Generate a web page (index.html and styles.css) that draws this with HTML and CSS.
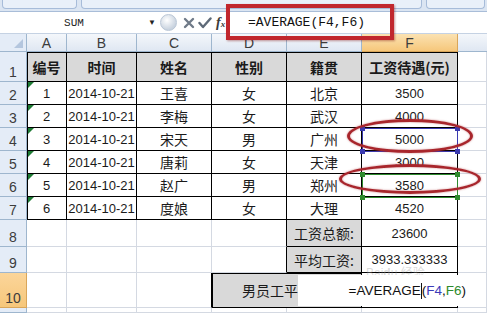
FILE: index.html
```html
<!DOCTYPE html>
<html>
<head>
    <meta charset="UTF-8">
    <title>工资表</title>
    <link rel="stylesheet" href="styles.css">
</head>
<body>
<div class="screen">
    <div class="ribbon">
        <div class="rbox b1"></div>
        <div class="rbox b2"></div>
        <div class="rbox b3"></div>
    </div>
    <div class="fbar">
        <div class="namebox">SUM</div>
        <div class="drop">&#9660;</div>
        <div class="tools">
            <span class="knob"></span>
            <svg class="tx" width="12" height="12" viewBox="0 0 12 12"><path d="M2 2 L10 10 M10 2 L2 10" stroke="#6f7a88" stroke-width="2.4" stroke-linecap="round"/></svg>
            <svg class="ok" width="14" height="12" viewBox="0 0 14 12"><path d="M1.5 6 L5 10 L12.5 1.5" fill="none" stroke="#5e6a78" stroke-width="2.4" stroke-linecap="round" stroke-linejoin="round"/></svg>
            <span class="fx">f<small>x</small></span>
        </div>
        <div class="finput">=AVERAGE(F4,F6)</div>
    </div>

    <div class="sheet">
        <!-- 列标 -->
        <div class="corner"><span></span></div>
        <div class="ch">A</div><div class="ch">B</div><div class="ch">C</div><div class="ch">D</div><div class="ch">E</div><div class="ch on">F</div><div class="ch last"></div>

        <!-- 1 -->
        <div class="rh">1</div>
        <div class="c t hd l top">编号</div><div class="c t hd top">时间</div><div class="c t hd top">姓名</div><div class="c t hd top">性别</div><div class="c t hd top">籍贯</div><div class="c t hd top">工资待遇(元)</div><div class="c"></div>

        <!-- 2 -->
        <div class="rh">2</div>
        <div class="c t num l tri">1</div><div class="c t num">2014-10-21</div><div class="c t">王喜</div><div class="c t">女</div><div class="c t">北京</div><div class="c t num">3500</div><div class="c"></div>

        <div class="rh">3</div>
        <div class="c t num l tri">2</div><div class="c t num">2014-10-21</div><div class="c t">李梅</div><div class="c t">女</div><div class="c t">武汉</div><div class="c t num">4000</div><div class="c"></div>

        <div class="rh">4</div>
        <div class="c t num l tri">3</div><div class="c t num">2014-10-21</div><div class="c t">宋天</div><div class="c t">男</div><div class="c t">广州</div><div class="c t num">5000</div><div class="c"></div>

        <div class="rh">5</div>
        <div class="c t num l tri">4</div><div class="c t num">2014-10-21</div><div class="c t">唐莉</div><div class="c t">女</div><div class="c t">天津</div><div class="c t num">3000</div><div class="c"></div>

        <div class="rh">6</div>
        <div class="c t num l tri">5</div><div class="c t num">2014-10-21</div><div class="c t">赵广</div><div class="c t">男</div><div class="c t">郑州</div><div class="c t num">3580</div><div class="c"></div>

        <div class="rh">7</div>
        <div class="c t num l tri">6</div><div class="c t num">2014-10-21</div><div class="c t">度娘</div><div class="c t">女</div><div class="c t">大理</div><div class="c t num">4520</div><div class="c"></div>

        <!-- 8 -->
        <div class="rh">8</div>
        <div class="c"></div><div class="c"></div><div class="c"></div><div class="c tr"></div><div class="c t g">工资总额:</div><div class="c t num">23600</div><div class="c"></div>

        <div class="rh">9</div>
        <div class="c"></div><div class="c"></div><div class="c"></div><div class="c tr"></div><div class="c t g">平均工资:</div><div class="c t num">3933.333333</div><div class="c"></div>

        <div class="rh on">10</div>
        <div class="c"></div><div class="c"></div><div class="c tr"></div><div class="c t g merged l top">男员工平均工资:</div><div class="c t"></div><div class="c"></div>

        <div class="rh"></div>
        <div class="c"></div><div class="c"></div><div class="c"></div><div class="c"></div><div class="c"></div><div class="c"></div><div class="c"></div>
    </div>

    <!-- 覆盖层 -->
    <div class="redbox"></div>
    <div class="sel blue"><i class="k1"></i><i class="k2"></i><i class="k3"></i><i class="k4"></i></div>
    <div class="sel green"><i class="k1"></i><i class="k2"></i><i class="k3"></i><i class="k4"></i></div>
    <div class="ring r1"></div>
    <div class="ring r2"></div>
    <div class="mark">Bai<b>d</b>u 经验</div>
    <div class="edit">=AVERAGE<span class="caret"></span>(<span class="ref1">F4</span>,<span class="ref2">F6</span>)</div>
</div>
</body>
</html>
```

FILE: styles.css
```css
* {
    margin: 0;
    padding: 0;
    box-sizing: border-box;
}

body {
    background: #fff;
    font-family: "Liberation Sans", "Noto Sans CJK SC", sans-serif;
}

.screen {
    position: relative;
    width: 487px;
    height: 313px;
    overflow: hidden;
}

/* 功能区底边 */
.ribbon {
    height: 12px;
    background: #dbe5f2;
    border-bottom: 1px solid #a9bdd8;
    display: flex;
    gap: 4px;
    padding: 0 2px 2px;
}

.rbox {
    height: 9px;
    background: #e9f0f9;
    border: 1px solid #a7bcd9;
    border-top: none;
    border-radius: 0 0 4px 4px;
}

.b1 { width: 76px; }
.b2 { width: 344px; }
.b3 { width: 60px; }

/* 编辑栏 */
.fbar {
    height: 22px;
    display: flex;
    align-items: center;
    background: #fff;
    border-bottom: 1px solid #c5d2e3;
}

.namebox {
    width: 148px;
    text-align: center;
    font-family: "Liberation Mono", monospace;
    font-size: 11px;
    color: #222;
}

.drop {
    width: 10px;
    font-size: 8px;
    color: #222;
}

.tools {
    width: 68px;
    height: 20px;
    display: flex;
    align-items: center;
    padding-left: 2px;
    overflow: hidden;
}

.knob {
    flex: none;
    width: 17px;
    height: 17px;
    border-radius: 50%;
    border: 1px solid #b9c6d6;
    background: radial-gradient(circle at 40% 35%, #fff 0, #c9d3df 70%);
}

.tx {
    flex: none;
    margin-left: 6px;
}

.ok {
    flex: none;
    margin-left: 3px;
}

.fx {
    margin-left: 4px;
    font-family: "Liberation Serif", serif;
    font-style: italic;
    font-weight: bold;
    font-size: 14px;
    color: #3a3a3a;
}

.fx small {
    font-size: 9px;
}

.finput {
    flex: 1;
    height: 22px;
    padding-left: 21px;
    line-height: 22px;
    font-family: "Liberation Mono", monospace;
    font-size: 13px;
    color: #111;
    border-left: 1px solid #b8c5d6;
}

/* 表格 */
.sheet {
    display: grid;
    grid-template-columns: 27px 40px 70px 75px 75px 75px 96px 1fr;
    grid-template-rows: 18px 30px repeat(6, 23px) 27px 26px 35px 1fr;
    height: 279px;
    font-size: 13px;
}

.corner {
    background: #e4ecf7;
    border-right: 1px solid #9eb6ce;
    border-bottom: 1px solid #9eb6ce;
    position: relative;
}

.corner span {
    position: absolute;
    right: 3px;
    bottom: 3px;
    border-left: 9px solid transparent;
    border-bottom: 9px solid #b4c6de;
}

.ch {
    background: linear-gradient(#f4f7fb, #dfe7f2);
    border-right: 1px solid #9eb6ce;
    border-bottom: 1px solid #9eb6ce;
    display: flex;
    align-items: center;
    justify-content: center;
    font-size: 14px;
    color: #3c3c3c;
}

.ch.on {
    background: linear-gradient(#fbe2b2, #f6c77b);
    border-color: #d9a65a;
}

.ch.last {
    border-right: none;
}

.rh {
    background: #e4ecf7;
    border-right: 1px solid #9eb6ce;
    border-bottom: 1px solid #9eb6ce;
    display: flex;
    align-items: flex-end;
    justify-content: center;
    padding-bottom: 1px;
    font-size: 14px;
    color: #3c3c3c;
}

.rh.on {
    background: linear-gradient(#fbd59a, #f6c77b);
    border-color: #d9a65a;
}

.c {
    border-right: 1px solid #d4d9e2;
    border-bottom: 1px solid #d4d9e2;
    display: flex;
    align-items: center;
    justify-content: center;
    font-family: "Noto Sans CJK SC", sans-serif;
    font-size: 14px;
    color: #1a1a1a;
    white-space: nowrap;
    overflow: hidden;
    position: relative;
}

.c.t {
    border-right-color: #000;
    border-bottom-color: #000;
}

.c.tr {
    border-right-color: #000;
}

.c.l {
    box-shadow: inset 1px 0 0 #000;
}

.c.top {
    box-shadow: inset 0 1px 0 #000;
}

.c.l.top {
    box-shadow: inset 1px 1px 0 #000;
}

.c.hd {
    background: #d9d9d9;
    font-weight: bold;
}

.c.g {
    background: #d9d9d9;
}

.c.num {
    font-family: "Liberation Sans", sans-serif;
    font-size: 13px;
}

.c.tri::before {
    content: "";
    position: absolute;
    left: 1px;
    top: 0;
    border-top: 6px solid #1e7b34;
    border-right: 6px solid transparent;
}

.merged {
    grid-column: span 2;
    justify-content: flex-start;
    padding-left: 30px;
}

/* 叠加层 */
.redbox {
    position: absolute;
    left: 226px;
    top: 4px;
    width: 168px;
    height: 36px;
    border: 4px solid #c1272d;
    box-shadow: 1px 1px 2px rgba(120, 0, 0, 0.4);
}

.sel {
    position: absolute;
    left: 362px;
    width: 96px;
    height: 24px;
    border: 1px solid;
}

.sel.blue {
    top: 128px;
    border-color: #3a3ab0;
}

.sel.green {
    top: 174px;
    border-color: #2e8b2e;
}

.sel i {
    position: absolute;
    width: 5px;
    height: 5px;
}

.sel.blue i { background: #3a3ab0; }
.sel.green i { background: #2e8b2e; }

.sel .k1 { left: -3px; top: -3px; }
.sel .k2 { right: -3px; top: -3px; }
.sel .k3 { left: -3px; bottom: -3px; }
.sel .k4 { right: -3px; bottom: -3px; }

.ring {
    position: absolute;
    border: 3px solid #a8262c;
    border-radius: 50%;
    box-shadow: 0 0 2px rgba(168, 38, 44, 0.6), inset 0 0 2px rgba(168, 38, 44, 0.5);
}

.r1 {
    left: 347px;
    top: 119px;
    width: 126px;
    height: 34px;
}

.r2 {
    left: 339px;
    top: 164px;
    width: 142px;
    height: 30px;
}

.mark {
    position: absolute;
    left: 366px;
    top: 263px;
    font-size: 12px;
    color: rgba(150, 150, 150, 0.35);
}

.edit {
    position: absolute;
    left: 298px;
    top: 275px;
    width: 172px;
    height: 31px;
    background: #fff;
    display: flex;
    align-items: center;
    justify-content: flex-end;
    padding-right: 4px;
    font-size: 13.5px;
    color: #111;
}

.caret {
    display: inline-block;
    width: 1px;
    height: 16px;
    background: #111;
}

.ref1 {
    color: #3b3bb8;
}

.ref2 {
    color: #2c8a2c;
}
```
